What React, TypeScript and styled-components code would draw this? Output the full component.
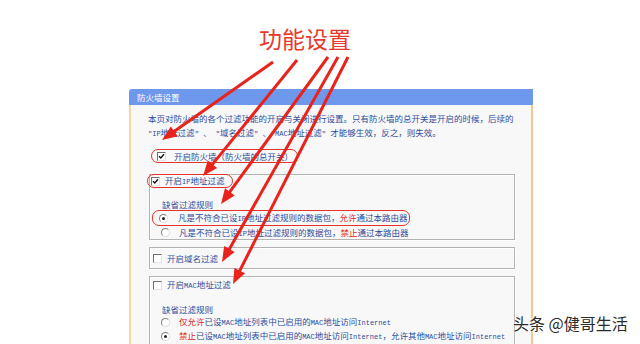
import React from 'react';
import styled, { createGlobalStyle, css } from 'styled-components';

const GlobalStyle = createGlobalStyle`
  html, body {
    margin: 0;
    padding: 0;
    background: #fff;
  }
  body {
    font-family: "Noto Sans CJK SC", "Noto Sans", sans-serif;
  }
`;

const Page = styled.div`
  position: relative;
  width: 640px;
  height: 344px;
  overflow: hidden;
  background: #fff;
`;

const Heading = styled.div`
  padding: 24px 0 0 259px;
  height: 28px;
  font-size: 23px;
  line-height: 28px;
  color: #e53a2e;
`;

const Panel = styled.div`
  margin: 37px 0 0 129px;
  width: 404px;
  height: 255px;
  display: flex;
  flex-direction: column;
`;

const PanelHeader = styled.div`
  height: 16px;
  padding-left: 8px;
  background: #6d98ec;
  border-top-left-radius: 3px;
  color: #fff;
  font-size: 8.5px;
  line-height: 16px;
`;

const PanelBody = styled.div`
  flex: 1;
  padding: 6px 0 0 17px;
  background: #f8f8f8;
  border-left: 2px solid #f4d6a8;
  border-right: 2px solid #f5c88a;
  color: #2d4c9c;
  font-size: 8.5px;
  line-height: 14px;
  white-space: pre;
`;

const Desc = styled.p`
  margin: 0;
  line-height: 14px;
`;

const Latin = styled.span`
  font-family: "Liberation Mono", monospace;
  font-size: 7px;
`;

const Row = styled.div<{ $circled?: boolean; $h: number; $gap: number; $mt?: number; $pl?: number; $pr?: number; $ml?: number }>`
  display: flex;
  align-items: center;
  height: ${p => p.$h}px;
  gap: ${p => p.$gap}px;
  margin-top: ${p => p.$mt ?? 0}px;
  margin-left: ${p => p.$ml ?? 0}px;
  padding-left: ${p => p.$pl ?? 0}px;
  padding-right: ${p => p.$pr ?? 0}px;
  ${p =>
    p.$circled &&
    css`
      width: fit-content;
      border: 1.5px solid #e2332b;
      border-radius: 7px;
    `}
`;

const Group = styled.div<{ $mt: number }>`
  width: 366px;
  box-sizing: border-box;
  margin: ${p => p.$mt}px 0 0 1px;
  padding-left: 2px;
  border: 1px solid #b3b3b3;
  box-shadow: inset 1px 1px 0 #fff, 1px 1px 0 #fff;
`;

const GroupEnd = styled.div<{ $h: number }>`
  height: ${p => p.$h}px;
`;

const RuleLabel = styled.div<{ $mt: number }>`
  margin-top: ${p => p.$mt}px;
  padding-left: 10px;
  height: 12px;
  line-height: 12px;
`;

const Warn = styled.span`
  color: #e3231c;
`;

const CheckBox = styled.span`
  flex: none;
  width: 9px;
  height: 9px;
  box-sizing: border-box;
  display: inline-flex;
  align-items: center;
  justify-content: center;
  background: #fff;
  border: 1px solid;
  border-color: #707070 #e4e4e4 #e4e4e4 #707070;
`;

const Radio = styled.span`
  flex: none;
  width: 9px;
  height: 9px;
  box-sizing: border-box;
  display: inline-flex;
  align-items: center;
  justify-content: center;
  border-radius: 50%;
  background: #fff;
  border: 1px solid;
  border-color: #808080 #e0e0e0 #e0e0e0 #808080;
`;

const Dot = styled.span`
  width: 3px;
  height: 3px;
  border-radius: 50%;
  background: #222;
`;

const Overlay = styled.svg`
  position: absolute;
  left: 0;
  top: 0;
  pointer-events: none;
`;

const Watermark = styled.div`
  position: absolute;
  left: 513px;
  top: 313px;
  font-size: 16px;
  line-height: 20px;
  color: #2b2b2b;
  white-space: nowrap;
  text-shadow: 0 0 2px #fff, 0 0 2px #fff, 0 0 3px #fff;
`;

const Check = ({ on }: { on?: boolean }) => (
  <CheckBox>
    {on && (
      <svg width="7" height="7" viewBox="0 0 7 7">
        <path d="M1 3.2 L2.8 5 L6 1.3" fill="none" stroke="#111" strokeWidth="1.4" />
      </svg>
    )}
  </CheckBox>
);

const Option = ({ on }: { on?: boolean }) => <Radio>{on && <Dot />}</Radio>;

const arrows: [number, number, number, number][] = [
  [273, 62, 162, 140],
  [297, 60, 203, 176],
  [328, 57, 221, 204],
  [338, 57, 222, 262],
  [348, 57, 233, 284],
];

const Arrow = ({ a }: { a: [number, number, number, number] }) => {
  const [x1, y1, x2, y2] = a;
  const len = Math.hypot(x2 - x1, y2 - y1);
  const ux = (x2 - x1) / len;
  const uy = (y2 - y1) / len;
  const hl = 15;
  const hw = 6;
  const bx = x2 - ux * hl;
  const by = y2 - uy * hl;
  const pts = `${x2},${y2} ${bx - uy * hw},${by + ux * hw} ${bx + uy * hw},${by - ux * hw}`;
  return (
    <>
      <line x1={x1} y1={y1} x2={bx + ux * 2} y2={by + uy * 2} stroke="#e8231b" strokeWidth="3" />
      <polygon points={pts} fill="#e8231b" />
    </>
  );
};

export default function App() {
  return (
    <>
      <GlobalStyle />
      <Page>
        <Heading>功能设置</Heading>
        <Panel>
          <PanelHeader>防火墙设置</PanelHeader>
          <PanelBody>
            <Desc>
              本页对防火墙的各个过滤功能的开启与关闭进行设置。只有防火墙的总开关是开启的时候，后续的
              <br />
              <Latin>"IP</Latin>地址过滤<Latin>" </Latin>、<Latin> "</Latin>域名过滤<Latin>" </Latin>、
              <Latin>"MAC</Latin>地址过滤<Latin>" </Latin>才能够生效，反之，则失效。
            </Desc>
            <Row $circled $h={12} $gap={8} $mt={8} $ml={3} $pl={5} $pr={4}>
              <Check on />
              <span>开启防火墙（防火墙的总开关）</span>
            </Row>

            <Group $mt={11}>
              <Row $circled $h={12} $gap={5} $mt={-1} $ml={-5} $pl={3} $pr={8}>
                <Check on />
                <span>
                  开启<Latin>IP</Latin>地址过滤
                </span>
              </Row>
              <RuleLabel $mt={10}>缺省过滤规则</RuleLabel>
              <Row $circled $h={14} $gap={10} $pl={6} $pr={2}>
                <Option on />
                <span>
                  凡是不符合已设<Latin>IP</Latin>地址过滤规则的数据包，<Warn>允许</Warn>通过本路由器
                </span>
              </Row>
              <Row $h={13} $gap={9} $pl={9}>
                <Option />
                <span>
                  凡是不符合已设<Latin>IP</Latin>地址过滤规则的数据包，<Warn>禁止</Warn>通过本路由器
                </span>
              </Row>
            </Group>

            <Group $mt={7}>
              <Row $h={20} $gap={5} $pl={1}>
                <Check />
                <span>开启域名过滤</span>
              </Row>
            </Group>

            <Group $mt={7}>
              <Row $h={14} $gap={5} $mt={1} $pl={1}>
                <Check />
                <span>
                  开启<Latin>MAC</Latin>地址过滤
                </span>
              </Row>
              <RuleLabel $mt={11}>缺省过滤规则</RuleLabel>
              <Row $h={14} $gap={9} $pl={9}>
                <Option />
                <span>
                  <Warn>仅允许</Warn>已设<Latin>MAC</Latin>地址列表中已启用的<Latin>MAC</Latin>地址访问
                  <Latin>Internet</Latin>
                </span>
              </Row>
              <Row $h={14} $gap={9} $pl={9}>
                <Option on />
                <span>
                  <Warn>禁止</Warn>已设<Latin>MAC</Latin>地址列表中已启用的<Latin>MAC</Latin>地址访问
                  <Latin>Internet</Latin>，允许其他<Latin>MAC</Latin>地址访问<Latin>Internet</Latin>
                </span>
              </Row>
              <GroupEnd $h={10} />
            </Group>
          </PanelBody>
        </Panel>
        <Overlay width="640" height="344" viewBox="0 0 640 344">
          {arrows.map((a, i) => (
            <Arrow key={i} a={a} />
          ))}
        </Overlay>
        <Watermark>头条 @健哥生活</Watermark>
      </Page>
    </>
  );
}
